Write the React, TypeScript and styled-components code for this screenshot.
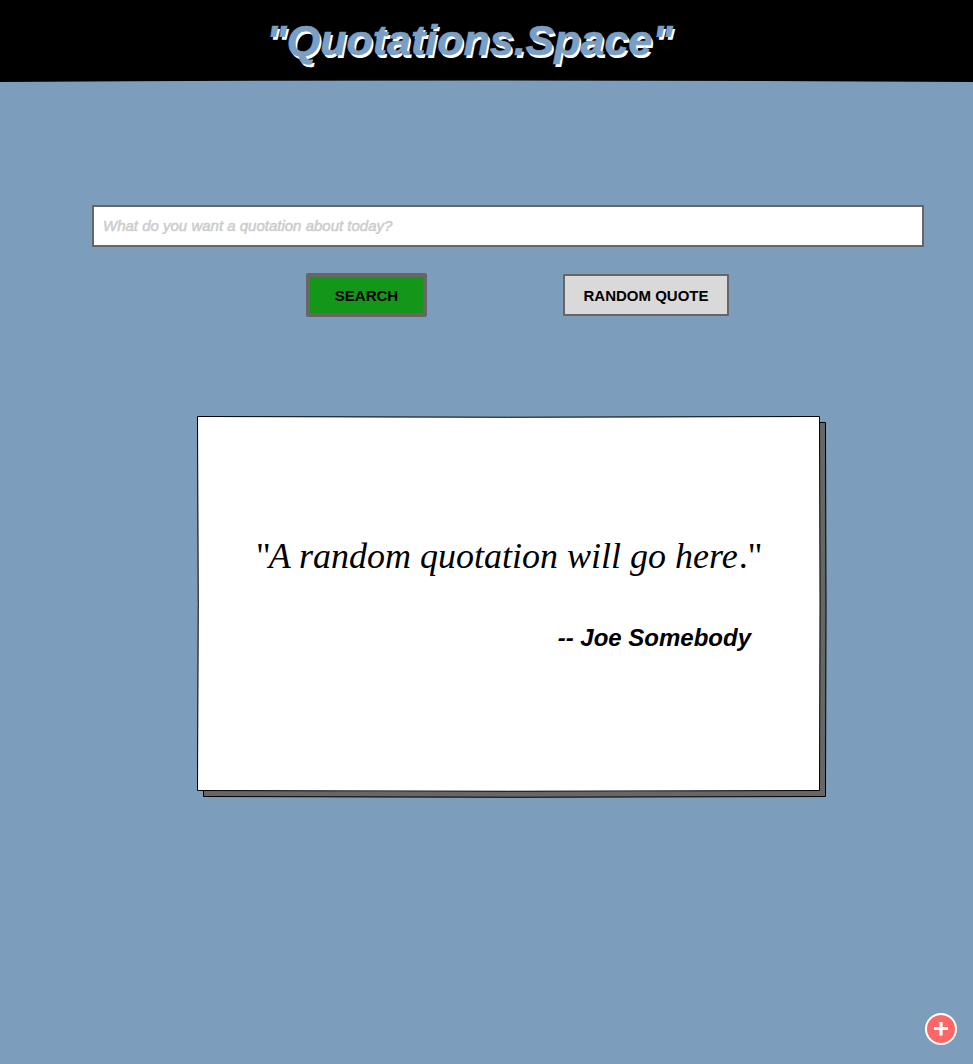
import React from "react";
import styled, { createGlobalStyle } from "styled-components";

const GlobalStyle = createGlobalStyle`
  *, *::before, *::after { box-sizing: border-box; }
  html, body { margin: 0; padding: 0; background: #7d9dbc; }
  body { overflow: hidden; }
`;

const Page = styled.div`
  display: flex;
  flex-direction: column;
  align-items: center;
  position: relative;
  height: 1064px;
  background: #7d9dbc;
  color: #000;
  font-family: "Liberation Sans", Arial, sans-serif;
`;

const Header = styled.header`
  display: flex;
  justify-content: center;
  position: relative;
  width: 100%;
  height: 82px;
  padding: 16px 34px 0 0;
  background: #000;
`;

const HeaderEdge = styled.svg`
  position: absolute;
  left: 0;
  bottom: 0;
  width: 100%;
  height: 2px;
`;

const Title = styled.h1`
  margin: 0;
  color: #7b9fc3;
  font-size: 43px;
  font-style: italic;
  font-weight: 700;
  line-height: 49px;
  white-space: nowrap;
  text-shadow: 2px 3px 0 #fff;
  -webkit-text-stroke: 0.7px #7b9fc3;
`;

const SearchForm = styled.form`
  display: flex;
  flex-direction: column;
  width: 832px;
  margin: 123px 0 0 43px;
`;

const SearchInput = styled.input`
  height: 42px;
  padding: 0 9px 2px;
  border: 2px solid #666;
  border-radius: 0;
  background: #fff;
  font: italic 400 15px "Liberation Sans", Arial, sans-serif;
  outline: none;

  &::placeholder {
    color: #ccc;
    opacity: 1;
    -webkit-text-stroke: 0.5px #ccc;
  }
`;

const Actions = styled.div`
  display: flex;
  align-items: center;
  gap: 136px;
  margin: 26px 0 0 214px;
`;

const Button = styled.button<{ $primary?: boolean }>`
  width: ${(p) => (p.$primary ? 121 : 166)}px;
  height: ${(p) => (p.$primary ? 44 : 42)}px;
  padding: 0;
  border: ${(p) => (p.$primary ? 4 : 2)}px solid #666;
  border-radius: ${(p) => (p.$primary ? 2 : 1)}px;
  background: ${(p) => (p.$primary ? "#149618" : "#d9d9d9")};
  color: #000;
  font: 700 15px "Liberation Sans", Arial, sans-serif;
`;

const Card = styled.section`
  display: flex;
  flex-direction: column;
  position: relative;
  width: 623px;
  height: 375px;
  margin: 99px 0 0 44px;
  padding: 120px 57px 0 59px;
`;

const CardOutline = styled.svg`
  position: absolute;
  top: 0;
  left: 0;
  width: 632px;
  height: 384px;
  overflow: visible;
`;

const Quote = styled.blockquote`
  position: relative;
  margin: 0;
  font: italic 400 36px/41px "Liberation Serif", "Times New Roman", serif;
  white-space: nowrap;
`;

const Upright = styled.span<{ $opening?: boolean }>`
  margin-left: ${(p) => (p.$opening ? 0 : 1)}px;
  margin-right: ${(p) => (p.$opening ? -2 : 0)}px;
  font-style: normal;
`;

const Author = styled.cite`
  position: relative;
  align-self: flex-end;
  margin: 47px 12px 0 0;
  font-size: 24px;
  font-weight: 700;
  line-height: 28px;
  white-space: nowrap;
`;

const AddButton = styled.button`
  position: absolute;
  right: 16px;
  bottom: 19px;
  width: 32px;
  height: 32px;
  padding: 0;
  border: 0;
  background: none;

  svg { display: block; }
`;

const outline =
  "M.5 .5 Q311 2 622.5 .5 Q623.5 187 622.5 374.5 Q311 376 .5 374.5 Q2 187 .5 .5Z";

export default function App() {
  return (
    <>
      <GlobalStyle />
      <Page>
        <Header>
          <Title>"Quotations.Space"</Title>
          <HeaderEdge viewBox="0 0 973 2" preserveAspectRatio="none">
            <path d="M0 2 Q486 -1 973 2Z" fill="#7d9dbc" />
          </HeaderEdge>
        </Header>
        <SearchForm onSubmit={(e) => e.preventDefault()}>
          <SearchInput placeholder="What do you want a quotation about today?" />
          <Actions>
            <Button $primary type="submit">SEARCH</Button>
            <Button type="button">RANDOM QUOTE</Button>
          </Actions>
        </SearchForm>
        <Card>
          <CardOutline viewBox="0 0 632 384" aria-hidden="true">
            <path d={outline} transform="translate(6 6)" fill="#666" stroke="#000" />
            <path d={outline} fill="#fff" stroke="#000" />
          </CardOutline>
          <Quote>
            <Upright $opening>"</Upright>A random quotation will go here<Upright>."</Upright>
          </Quote>
          <Author>-- Joe Somebody</Author>
        </Card>
        <AddButton type="button" aria-label="Add">
          <svg width="32" height="32" viewBox="0 0 32 32">
            <circle cx="16" cy="16" r="15" fill="#ff6666" stroke="#fff" strokeWidth="2" />
            <path d="M9 15.5H23M16 9V22.5" stroke="#fff" strokeWidth="3.2" />
          </svg>
        </AddButton>
      </Page>
    </>
  );
}
